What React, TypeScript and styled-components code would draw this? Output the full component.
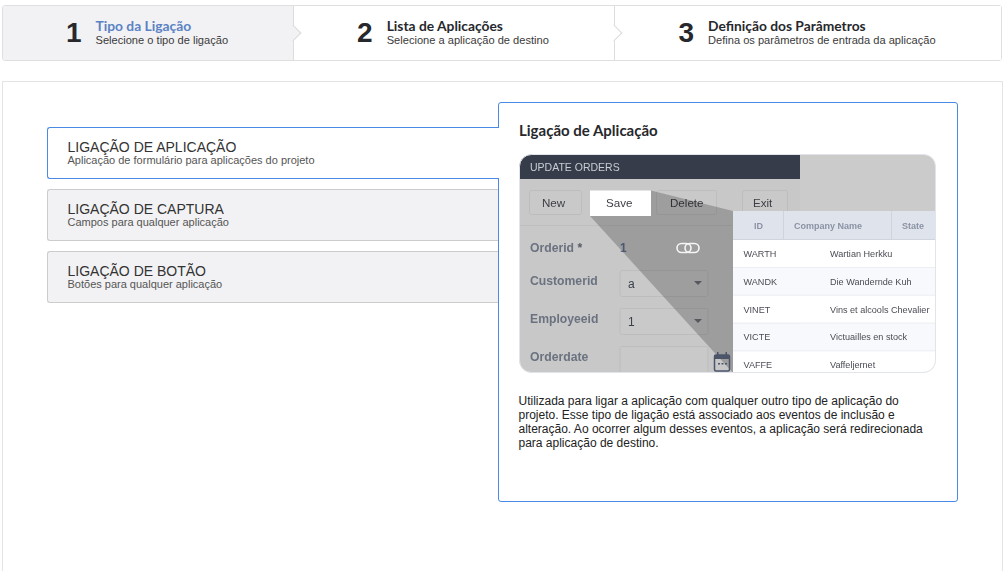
import React from 'react';
import styled, { createGlobalStyle } from 'styled-components';

const steps = [
  { number: 1, title: 'Tipo da Ligação', text: 'Selecione o tipo de ligação' },
  { number: 2, title: 'Lista de Aplicações', text: 'Selecione a aplicação de destino' },
  { number: 3, title: 'Definição dos Parâmetros', text: 'Defina os parâmetros de entrada da aplicação' },
];

const tabs = [
  { title: 'Ligação de Aplicação', text: 'Aplicação de formulário para aplicações do projeto' },
  { title: 'Ligação de Captura', text: 'Campos para qualquer aplicação' },
  { title: 'Ligação de Botão', text: 'Botões para qualquer aplicação' },
];

const orders = [
  ['WARTH', 'Wartian Herkku'],
  ['WANDK', 'Die Wandernde Kuh'],
  ['VINET', 'Vins et alcools Chevalier'],
  ['VICTE', 'Victuailles en stock'],
  ['VAFFE', 'Vaffeljernet'],
];

const Preview = () => (
  <PreviewSvg viewBox="0 0 417 219" width="417" height="219">
    <defs>
      <clipPath id="previewClip">
        <rect x="0.5" y="0.5" width="416" height="218" rx="12" />
      </clipPath>
      <filter id="soft">
        <feGaussianBlur stdDeviation="0.25" />
      </filter>
    </defs>
    <g clipPath="url(#previewClip)">
      <rect width="417" height="219" fill="#cbcbcb" />
      <rect width="281" height="219" y="25" fill="#c8c8c8" />
      <rect width="281" height="25" fill="#363c4a" />
      <g filter="url(#soft)" fontFamily="'Liberation Sans', sans-serif">
        <text x="11" y="17" fontSize="10.5" fill="#c9ccd3">UPDATE ORDERS</text>
        <rect x="10.5" y="36.5" width="52" height="24" rx="2" fill="#c9c9c9" stroke="#bdbdbd" />
        <text x="23" y="53" fontSize="11.6" fill="#3c3f45">New</text>
        <rect x="137.5" y="36.5" width="60" height="24" rx="2" fill="#c9c9c9" stroke="#bdbdbd" />
        <text x="151" y="53" fontSize="11.6" fill="#3c3f45">Delete</text>
        <rect x="223.5" y="36.5" width="45" height="24" rx="2" fill="#c9c9c9" stroke="#bdbdbd" />
        <text x="234" y="53" fontSize="11.6" fill="#3c3f45">Exit</text>
        <rect y="71" width="214" height="1" fill="#bfbfbf" />

        <g fontSize="12.2" fontWeight="700" fill="#6b7280">
          <text x="11" y="98">Orderid <tspan fill="#555b66">*</tspan></text>
          <text x="11" y="131">Customerid</text>
          <text x="11" y="169">Employeeid</text>
          <text x="11" y="207">Orderdate</text>
        </g>
        <text x="101" y="98" fontSize="12" fontWeight="700" fill="#5f6f8e">1</text>
        <rect x="101" y="116.5" width="88" height="26" rx="2" fill="#c9c9c9" stroke="#bdbdbd" />
        <text x="109" y="134" fontSize="12" fill="#3a3f4a">a</text>
        <path d="M175 127h8l-4 4z" fill="#6d7079" />
        <rect x="101" y="154.5" width="88" height="26" rx="2" fill="#c9c9c9" stroke="#bdbdbd" />
        <text x="109" y="172" fontSize="12" fill="#3a3f4a">1</text>
        <path d="M175 165h8l-4 4z" fill="#6d7079" />
        <rect x="101" y="192.5" width="88" height="30" rx="2" fill="#c9c9c9" stroke="#bdbdbd" />
      </g>
      <path d="M71 62L132 36.5L214 57V219Z" fill="#000" fillOpacity="0.21" />
      <g fill="none" stroke="#f6f6f6" strokeWidth="1.6">
        <rect x="158" y="89.5" width="14" height="9" rx="4.5" />
        <rect x="166" y="89.5" width="14" height="9" rx="4.5" />
      </g>
      <rect x="71" y="36.5" width="61" height="25.5" fill="#fff" />
      <text x="87" y="53" fontSize="11.6" fontFamily="'Liberation Sans', sans-serif" fill="#3c3f45" filter="url(#soft)">Save</text>
      <rect x="195.5" y="201" width="15" height="16" rx="1.5" fill="none" stroke="#4b5468" strokeWidth="1.5" />
      <path d="M195 201h16v4h-16zM198 198h1.5v3H198zM206.5 198h1.5v3h-1.5z" fill="#4b5468" />
      <path d="M199 209h2v1.5h-2zM202.5 209h2v1.5h-2zM206 209h2v1.5h-2z" fill="#4b5468" />

      <rect x="214" y="57" width="203" height="29" fill="#dfe3eb" />
      <rect x="214" y="85" width="203" height="1" fill="#cfd4de" />
      <rect x="264" y="57" width="1" height="28" fill="#ced3dc" />
      <rect x="372" y="57" width="1" height="28" fill="#ced3dc" />
      <g fontFamily="'Liberation Sans', sans-serif" filter="url(#soft)" fontSize="9" fontWeight="700" fill="#8b93a5">
        <text x="235" y="75">ID</text>
        <text x="275" y="75">Company Name</text>
        <text x="383" y="75">State</text>
      </g>
      {orders.map((order, i) => {
        const top = 86 + i * 27.8;
        return (
          <g key={order[0]}>
            <rect x="214" y={top} width="203" height="27.8" fill={i % 2 ? '#f8f9fc' : '#fff'} />
            <rect x="214" y={top + 27} width="203" height="1" fill="#e9ecf2" />
            <g fontFamily="'Liberation Sans', sans-serif" fontSize="9.1" fill="#4a4d55" filter="url(#soft)">
              <text x="224.5" y={top + 17}>{order[0]}</text>
              <text x="311" y={top + 17}>{order[1]}</text>
            </g>
          </g>
        );
      })}
    </g>
    <rect x="0.5" y="0.5" width="416" height="218" rx="12" fill="none" stroke="#e1e4ea" />
  </PreviewSvg>
);

const App = () => {
  return (
    <Page>
      <GlobalStyle />
      <Stepper>
        {steps.map((step, i) => (
          <Step key={step.number} $active={i === 0} $last={i === steps.length - 1}>
            <StepNumber>{step.number}</StepNumber>
            <StepCopy>
              <StepTitle $active={i === 0}>{step.title}</StepTitle>
              <StepText>{step.text}</StepText>
            </StepCopy>
          </Step>
        ))}
      </Stepper>
      <Panel>
        <TabList>
          {tabs.map((tab, i) => (
            <Tab key={tab.title} $active={i === 0}>
              <TabTitle>{tab.title}</TabTitle>
              <TabText>{tab.text}</TabText>
            </Tab>
          ))}
        </TabList>
        <Detail>
          <DetailTitle>Ligação de Aplicação</DetailTitle>
          <Preview />
          <DetailText>
            Utilizada para ligar a aplicação com qualquer outro tipo de aplicação do projeto. Esse tipo de
            ligação está associado aos eventos de inclusão e alteração. Ao ocorrer algum desses eventos, a
            aplicação será redirecionada para aplicação de destino.
          </DetailText>
        </Detail>
      </Panel>
    </Page>
  );
};

const GlobalStyle = createGlobalStyle`
  html, body {
    margin: 0;
    padding: 0;
    height: 100%;
    overflow: hidden;
    background: #fff;
    font-family: 'Liberation Sans', Arial, sans-serif;
  }
`;
const Page = styled.div`
  height: 571px;
  overflow: hidden;
  padding: 5px 2px 0 2px;
  box-sizing: border-box;
`;
const Stepper = styled.div`
  width: 1000px;
  height: 56px;
  box-sizing: border-box;
  display: grid;
  grid-template-columns: 291px 321px 1fr;
  border: 1px solid #dfdfdf;
  border-radius: 3px;
`;
const Step = styled.div<{ $active: boolean; $last: boolean }>`
  position: relative;
  display: flex;
  align-items: center;
  justify-content: center;
  gap: 14px;
  padding-right: 2px;
  background: ${(p) => (p.$active ? '#f2f2f4' : '#fff')};
  border-right: ${(p) => (p.$last ? 'none' : '1px solid #dcdcdc')};
  border-radius: ${(p) => (p.$active ? '3px 0 0 3px' : '0')};

  &::after {
    content: '';
    display: ${(p) => (p.$last ? 'none' : 'block')};
    position: absolute;
    right: -6px;
    top: 21px;
    width: 11px;
    height: 11px;
    background: ${(p) => (p.$active ? '#f2f2f4' : '#fff')};
    border-top: 1px solid #dcdcdc;
    border-right: 1px solid #dcdcdc;
    transform: rotate(45deg);
    z-index: 1;
  }
`;
const StepNumber = styled.div`
  font-size: 28px;
  font-weight: 700;
  line-height: 32px;
  color: #26282c;
`;
const StepCopy = styled.div`
  margin-bottom: 2px;
`;
const StepTitle = styled.div<{ $active: boolean }>`
  font-family: Lato, sans-serif;
  font-size: 13.8px;
  font-weight: 700;
  line-height: 15px;
  margin-bottom: 1px;
  color: ${(p) => (p.$active ? '#5b82c4' : '#26282c')};
`;
const StepText = styled.div`
  font-size: 11.1px;
  line-height: 13px;
  color: #3a3a3a;
`;
const Panel = styled.div`
  width: 1001px;
  height: 560px;
  margin-top: 20px;
  box-sizing: border-box;
  border: 1px solid #e4e4e4;
  padding: 20px 0 0 44px;
  display: flex;
  align-items: flex-start;
`;
const TabList = styled.div`
  width: 451px;
  margin-top: 25px;
  display: flex;
  flex-direction: column;
  gap: 10px;
`;
const Tab = styled.div<{ $active: boolean }>`
  position: relative;
  z-index: ${(p) => (p.$active ? 2 : 0)};
  height: 52px;
  box-sizing: border-box;
  padding: 12px 0 0 19.5px;
  margin-right: ${(p) => (p.$active ? '-1px' : '0')};
  background: ${(p) => (p.$active ? '#fff' : '#f2f2f4')};
  border: 1px solid ${(p) => (p.$active ? '#4a8ae6' : '#cccccc')};
  border-right: none;
  border-radius: 3px 0 0 3px;
`;
const TabTitle = styled.div`
  font-size: 14px;
  line-height: 15px;
  text-transform: uppercase;
  color: #333;
`;
const TabText = styled.div`
  font-size: 11px;
  line-height: 11px;
  color: #555;
`;
const Detail = styled.div`
  width: 460px;
  height: 400px;
  box-sizing: border-box;
  padding: 19px 20px;
  background: #fff;
  border: 1px solid #4a8ae6;
  border-radius: 3px;
`;
const DetailTitle = styled.div`
  font-family: Lato, sans-serif;
  font-size: 15px;
  font-weight: 700;
  line-height: 16px;
  color: #26282c;
  margin-bottom: 16px;
`;
const PreviewSvg = styled.svg`
  display: block;
`;
const DetailText = styled.p`
  margin: 21px 0 0 -0.5px;
  font-size: 12px;
  line-height: 14px;
  color: #222;
`;

export default App;
